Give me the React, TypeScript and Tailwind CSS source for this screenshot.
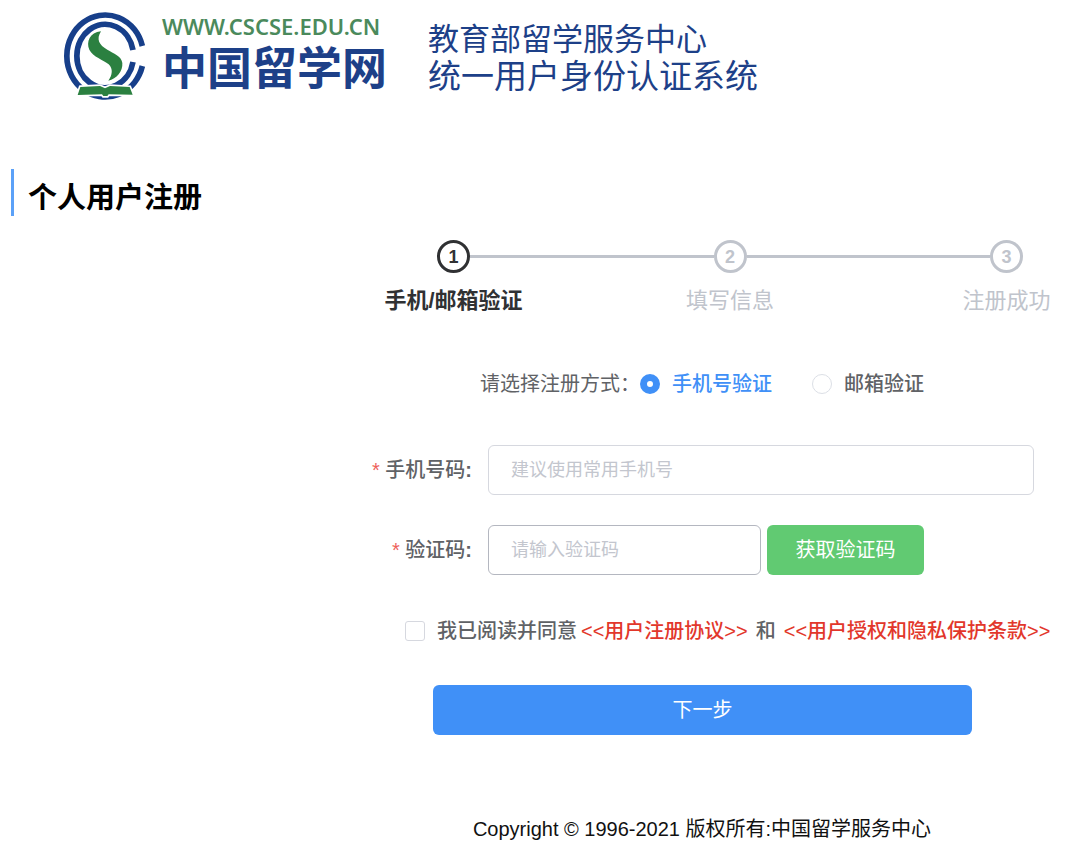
import { useState } from "react";

type VerifyMethod = "phone" | "email";

const steps = ["手机/邮箱验证", "填写信息", "注册成功"];

const methods: { value: VerifyMethod; label: string }[] = [
  { value: "phone", label: "手机号验证" },
  { value: "email", label: "邮箱验证" },
];

function LogoMark() {
  return (
    <svg viewBox="36 30 258 276" className="h-[92px] w-[86px] shrink-0" aria-hidden="true">
      <g fill="none" stroke="#173f8a" strokeWidth="17">
        <path d="M277 138 A115 123 0 1 0 277 198" />
        <path d="M249 150 A85 95 0 1 0 249 186" />
      </g>
      <path
        d="M153 94 C119 97 108 127 118 149 C129 171 160 179 176 193 C190 206 187 226 175 242 C200 236 219 214 217 189 C215 168 190 160 172 149 C147 135 138 118 153 94Z"
        fill="#2b8040"
      />
      <path
        d="M91 261 L150 258 L165 265 L180 258 L239 261 L248 284 L176 283 L172 288 L160 288 L156 283 L83 285Z"
        fill="#2b8040"
        stroke="#fff"
        strokeWidth="10"
        paintOrder="stroke"
      />
    </svg>
  );
}

function Header() {
  return (
    <header className="flex items-start pt-[10px] pl-[62px] whitespace-nowrap text-[#1d4088]">
      <LogoMark />
      <div className="ml-[14px] w-[226px]">
        <p className="mt-1 font-['Noto_Sans','Open_Sans',sans-serif] text-[22px] leading-6 font-semibold text-[#4b8a5c]">
          WWW.CSCSE.EDU.CN
        </p>
        <p className="text-[45px] leading-[64px] font-bold">中国留学网</p>
      </div>
      <div className="mt-3 ml-10">
        <p className="text-[31px] leading-9">教育部留学服务中心</p>
        <p className="text-[33px] leading-[37px]">统一用户身份认证系统</p>
      </div>
    </header>
  );
}

function Steps() {
  return (
    <ol className="mr-[57px] ml-[69px] flex">
      {steps.map((title, index) => {
        const active = index === 0;
        return (
          <li key={title} className={index > 0 ? "flex flex-1" : "flex"}>
            {index > 0 && <span className="mt-[15px] h-[3px] flex-1 bg-[#c0c4cc]" />}
            <div
              className={`flex w-[33px] flex-col items-center ${
                active ? "font-bold text-[#303133]" : "text-[#c0c4cc]"
              }`}
            >
              <span className="flex size-[33px] shrink-0 items-center justify-center rounded-full border-[3px] border-current text-lg leading-none font-bold">
                {index + 1}
              </span>
              <span className="mt-3 text-[22px] leading-8 whitespace-nowrap">{title}</span>
            </div>
          </li>
        );
      })}
    </ol>
  );
}

function FieldLabel({ htmlFor, text }: { htmlFor: string; text: string }) {
  return (
    <label htmlFor={htmlFor} className="mr-4 w-[104px] shrink-0 text-right font-medium whitespace-nowrap">
      <span className="text-[#ee5f5b]">*</span> {text}
      <span className="font-bold">:</span>
    </label>
  );
}

export default function App() {
  const [method, setMethod] = useState<VerifyMethod>("phone");

  return (
    <div className="bg-white pb-4 font-['Liberation_Sans','Noto_Sans_CJK_SC',sans-serif] text-xl text-[#606266]">
      <Header />

      <h1 className="mt-[67px] ml-[11px] border-l-[3px] border-[#5ba1f8] pt-3 pl-[14px] text-[29px] leading-[35px] font-bold text-black">
        个人用户注册
      </h1>

      <form className="mt-6 ml-[368px]" onSubmit={(e) => e.preventDefault()}>
        <Steps />

        <fieldset className="mt-[51px] ml-28 flex h-8 items-center whitespace-nowrap">
          <legend className="float-left contents">请选择注册方式：</legend>
          {methods.map(({ value, label }) => (
            <label
              key={value}
              className="mr-10 flex items-center gap-3 font-medium has-checked:text-[#4090f7]"
            >
              <input
                type="radio"
                name="method"
                value={value}
                checked={method === value}
                onChange={() => setMethod(value)}
                className="size-5 appearance-none rounded-full border border-[#dcdfe6] bg-white checked:border-[7px] checked:border-[#4090f7]"
              />
              {label}
            </label>
          ))}
        </fieldset>

        <div className="mt-[45px] mr-[46px] flex items-center">
          <FieldLabel htmlFor="phone" text="手机号码" />
          <input
            id="phone"
            type="tel"
            placeholder="建议使用常用手机号"
            className="h-[50px] min-w-0 flex-1 rounded-md border border-[#d6d8df] px-[22px] text-lg outline-none placeholder:text-[#c3c6ce]"
          />
        </div>

        <div className="mt-[30px] flex items-center">
          <FieldLabel htmlFor="code" text="验证码" />
          <input
            id="code"
            type="text"
            placeholder="请输入验证码"
            className="h-[50px] w-[273px] rounded-md border border-[#b4b7c0] px-[22px] text-lg outline-none placeholder:text-[#c3c6ce]"
          />
          <button type="button" className="ml-[6px] h-[50px] w-[157px] rounded-md bg-[#61ca72] text-white">
            获取验证码
          </button>
        </div>

        <div className="mt-10 ml-[37px] flex h-8 items-center whitespace-nowrap">
          <input
            id="agree"
            type="checkbox"
            className="size-5 appearance-none rounded-[3px] border border-[#d6d8df] bg-white checked:bg-[#4090f7]"
          />
          <label htmlFor="agree" className="ml-3 font-medium">
            我已阅读并同意
          </label>
          <a href="#agreement" className="ml-1 font-medium text-[#e2372b]">
            &lt;&lt;用户注册协议&gt;&gt;
          </a>
          <span className="mx-2 font-medium">和</span>
          <a href="#privacy" className="font-medium text-[#e2372b]">
            &lt;&lt;用户授权和隐私保护条款&gt;&gt;
          </a>
        </div>

        <div className="mt-[38px] mr-[108px] ml-[65px]">
          <button type="submit" className="h-[50px] w-full rounded-md bg-[#4090f7] text-white">
            下一步
          </button>
        </div>
      </form>

      <footer className="mt-20 ml-[368px] pr-11 text-center whitespace-nowrap text-[#111]">
        Copyright © 1996-2021 版权所有:中国留学服务中心
      </footer>
    </div>
  );
}
